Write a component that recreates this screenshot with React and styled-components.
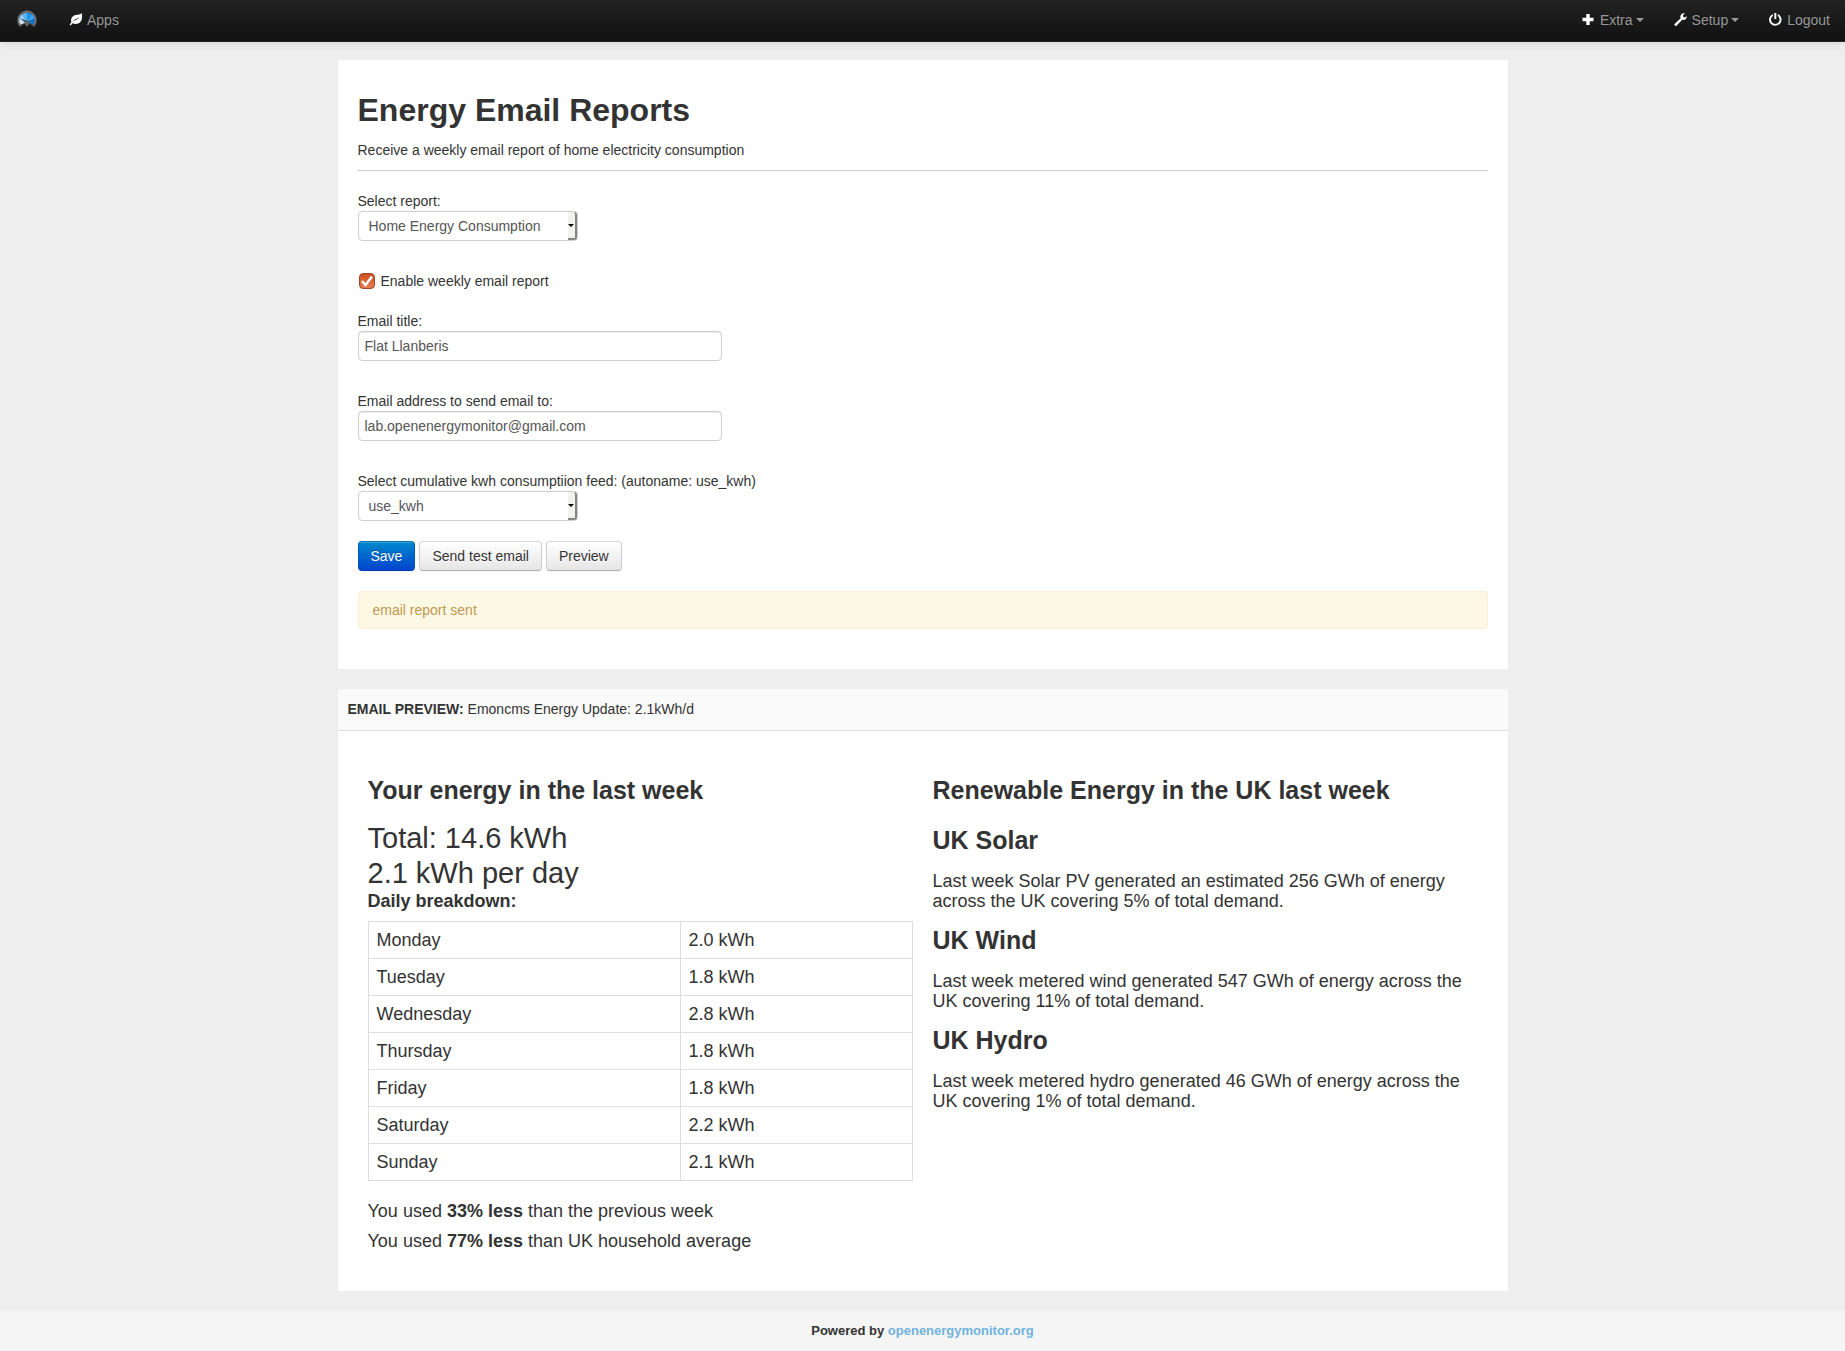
import React, { useState } from "react";
import styled, { createGlobalStyle, css } from "styled-components";

const GlobalStyle = createGlobalStyle`
  *, *::before, *::after { box-sizing: border-box; }
  #root { display: flex; flex-direction: column; min-height: 100vh; }
  body {
    margin: 0;
    background: #eee;
    color: #333;
    font-family: "Liberation Sans", Helvetica, Arial, sans-serif;
    font-size: 14px;
    line-height: 20px;
  }
`;

const Navbar = styled.nav`
  display: flex;
  justify-content: space-between;
  height: 42px;
  border-bottom: 1px solid #252525;
  background: linear-gradient(to bottom, #222, #111);
  box-shadow: 0 1px 10px rgba(0, 0, 0, 0.1);
`;

const NavGroup = styled.div`
  display: flex;
`;

const NavLink = styled.a`
  display: flex;
  align-items: center;
  padding: 0 15px;
  height: 40px;
  color: #999;
  text-decoration: none;
  text-shadow: 0 -1px 0 rgba(0, 0, 0, 0.25);
`;

const Icon = styled.svg`
  width: 14px;
  height: 14px;
  margin-right: 4px;
  fill: #fff;
`;

const Logo = styled.svg`
  width: 24px;
  height: 24px;
`;

const Caret = styled.span`
  margin-left: 3px;
  border: 4px solid transparent;
  border-top-color: #999;
  border-bottom: 0;
`;

const Main = styled.main`
  display: flex;
  flex-direction: column;
  gap: 20px;
  width: 100%;
  max-width: 1170px;
  margin: 18px auto 20px;
`;

const Card = styled.section`
  background: #fff;
`;

const FormCard = styled(Card)`
  padding: 30px 20px 40px;
`;

const Title = styled.h1`
  margin: 0 0 10px;
  font-size: 32px;
  line-height: 40px;
`;

const Intro = styled.p`
  margin: 0 0 10px;
`;

const Rule = styled.hr`
  height: 1px;
  margin: 0 0 20px;
  border: 0;
  background: #ccc;
`;

const Field = styled.div`
  display: flex;
  flex-direction: column;
  align-items: flex-start;
  margin-bottom: ${(p) => (p.$last ? 20 : 30)}px;
`;

const control = css`
  height: 30px;
  border: 1px solid #ccc;
  border-radius: 4px;
  background: #fff;
  color: #555;
  font: inherit;
`;

const TextInput = styled.input`
  ${control}
  width: 364px;
  max-width: 100%;
  padding: 4px 6px;
  box-shadow: inset 0 1px 1px rgba(0, 0, 0, 0.075);
`;

const SelectBox = styled.div`
  position: relative;
  width: 220px;
`;

const Select = styled.select`
  ${control}
  width: 100%;
  padding: 4px 20px 4px 10px;
  appearance: none;
`;

const SelectArrow = styled.span`
  position: absolute;
  top: 1px;
  right: 1px;
  bottom: 1px;
  display: flex;
  align-items: center;
  justify-content: center;
  width: 9px;
  border-right: 2px solid #858585;
  border-bottom: 2px solid #858585;
  border-radius: 0 3px 3px 0;
  background: #f0f0ee;
  pointer-events: none;

  &::before {
    content: "";
    border: 3px solid transparent;
    border-top-color: #000;
    border-bottom: 0;
  }
`;

const CheckRow = styled.label`
  display: flex;
  align-items: center;
  gap: 6px;
  margin-bottom: 20px;
`;

const CheckFrame = styled.span`
  position: relative;
  display: flex;
  width: 17px;
  padding-left: 1px;
`;

const Checkbox = styled.input`
  appearance: none;
  width: 16px;
  height: 16px;
  margin: 0;
  border: 1px solid #9a4a2a;
  border-radius: 4px;
  background: #fff;

  &:checked {
    background: linear-gradient(to bottom, #d0501f, #e57c50);
  }
`;

const Tick = styled.svg`
  position: absolute;
  top: 0;
  left: 1px;
  width: 16px;
  height: 16px;
  fill: none;
  stroke: #fff;
  stroke-width: 2.4;
  pointer-events: none;
`;

const Buttons = styled.div`
  display: flex;
  gap: 4px;
  margin-bottom: 20px;
`;

const Button = styled.button`
  height: 30px;
  padding: 0 12px;
  border: 1px solid;
  border-radius: 4px;
  font: inherit;
  ${(p) =>
    p.$primary
      ? css`
          border-color: #0074bb #0058b8 #003bb3;
          background: linear-gradient(to bottom, #08c, #04c);
          color: #fff;
          text-shadow: 0 -1px 0 rgba(0, 0, 0, 0.25);
        `
      : css`
          border-color: #d9d9d9 #cfcfcf #b3b3b3;
          background: linear-gradient(to bottom, #fff, #e6e6e6);
          color: #333;
          text-shadow: 0 1px 1px rgba(255, 255, 255, 0.75);
        `}
  box-shadow: inset 0 1px 0 rgba(255, 255, 255, 0.2), 0 1px 2px rgba(0, 0, 0, 0.05);
`;

const Alert = styled.div`
  padding: 8px 14px;
  border: 1px solid #fbeed5;
  border-radius: 4px;
  background: #fcf8e3;
  color: #c09853;
`;

const PreviewHeader = styled.header`
  padding: 10px 10px 11px;
  border-bottom: 1px solid #ddd;
  background: #fafafa;
`;

const PreviewBody = styled.div`
  display: grid;
  grid-template-columns: 1fr 1fr;
  gap: 20px;
  padding: 40px 30px;
  font-size: 18px;
`;

const Heading = styled.h2`
  margin: 0 0 12px;
  font-size: 25px;
  line-height: 38px;
`;

const SubHeading = styled(Heading).attrs({ as: "h3" })``;

const Total = styled.div`
  font-size: 29px;
  line-height: 35px;
`;

const Table = styled.table`
  width: 100%;
  margin-bottom: 20px;
  border-collapse: collapse;

  caption {
    margin-bottom: 10px;
    font-weight: bold;
    text-align: left;
  }

  th, td {
    padding: 8px;
    border: 1px solid #ddd;
    font-weight: normal;
    text-align: left;
  }
`;

const Text = styled.p`
  margin: 0 0 10px;

  &:last-child { margin-bottom: 0; }
`;

const Footer = styled.footer`
  flex: 1;
  padding: 10px;
  background: #f5f5f5;
  font-size: 13px;
  font-weight: bold;
  text-align: center;

  a {
    color: #70b3dd;
    text-decoration: none;
  }
`;

const days = [
  ["Monday", "2.0"],
  ["Tuesday", "1.8"],
  ["Wednesday", "2.8"],
  ["Thursday", "1.8"],
  ["Friday", "1.8"],
  ["Saturday", "2.2"],
  ["Sunday", "2.1"],
];

const sources = [
  ["UK Solar", "Last week Solar PV generated an estimated 256 GWh of energy across the UK covering 5% of total demand."],
  ["UK Wind", "Last week metered wind generated 547 GWh of energy across the UK covering 11% of total demand."],
  ["UK Hydro", "Last week metered hydro generated 46 GWh of energy across the UK covering 1% of total demand."],
];

function GaugeLogo() {
  return (
    <Logo viewBox="0 0 24 24" aria-hidden="true">
      <path
        d="M4.800 18.800A9.600 9.600 0 1 1 19.200 18.800L16 16.500L14.500 15L12 18.500L9.500 15L8 16.500Z"
        fill="#5d5d5d"
        stroke="#454545"
        strokeWidth="0.8"
      />
      <path d="M5.200 17.200A8.700 8.700 0 1 1 18.800 17.200" fill="none" stroke="#8c8c8c" strokeWidth="0.7" />
      <path d="M12 14L5.600 16.600A7.800 7.800 0 0 1 4.300 10.500Z" fill="#c9e0f2" />
      <path d="M12 14L4.300 10.500A7.800 7.800 0 0 1 7.200 6.300Z" fill="#8fcbf8" />
      <path d="M12 14L7.200 6.300A7.800 7.800 0 0 1 12 4.700Z" fill="#55b3f6" />
      <path d="M12 14V4.700A7.800 7.800 0 0 1 16.800 6.300Z" fill="#1b93ee" />
      <path d="M12 14L16.800 6.300A7.800 7.800 0 0 1 19.700 10.500Z" fill="#3aa4f2" />
      <path d="M12 14L19.700 10.500A7.800 7.800 0 0 1 18.400 16.600Z" fill="#1672c2" />
      <path d="M5.500 10.600L13.600 13.600L11.500 16Z" fill="#3c4650" />
      <circle cx="12" cy="15.500" r="2.300" fill="#666" />
    </Logo>
  );
}

function SelectField({ id, label, value, last }) {
  return (
    <Field $last={last}>
      <label htmlFor={id}>{label}</label>
      <SelectBox>
        <Select id={id} defaultValue={value}>
          <option>{value}</option>
        </Select>
        <SelectArrow />
      </SelectBox>
    </Field>
  );
}

function TextField({ id, label, value, type = "text" }) {
  return (
    <Field>
      <label htmlFor={id}>{label}</label>
      <TextInput id={id} type={type} defaultValue={value} />
    </Field>
  );
}

export default function App() {
  const [enabled, setEnabled] = useState(true);

  return (
    <>
      <GlobalStyle />
      <Navbar>
        <NavGroup>
          <NavLink href="#home" aria-label="Home">
            <GaugeLogo />
          </NavLink>
          <NavLink href="#apps">
            <Icon viewBox="0 0 14 14">
              <path
                fillRule="evenodd"
                d="M12.700 0C13.700 4.500 13 9.300 9 10.600C6.900 11.300 5 10.800 3.600 10.200C2.900 10.800 2.300 11.600 1.800 12.500L0.600 11.800C1 10.900 1.700 10 2.400 9.300C1.300 5.800 3.400 2.800 6.700 2.100C9 1.600 11.500 1.700 12.700 0ZM10.300 4C8.300 6 5.500 6 3.500 8.700C5.900 6.900 8.800 6.800 10.300 4Z"
              />
            </Icon>
            Apps
          </NavLink>
        </NavGroup>
        <NavGroup>
          <NavLink href="#extra">
            <Icon viewBox="0 0 14 14">
              <path d="M4.300 1H7.700V4.800H11.500V8.200H7.700V12H4.300V8.200H0.500V4.800H4.300Z" />
            </Icon>
            Extra
            <Caret />
          </NavLink>
          <NavLink href="#setup">
            <Icon viewBox="0 0 14 14">
              <path d="M12.700 3.300L10.600 4.500L9 3.600V2L11 0.500C9.200 0 7.300 0.700 6.600 2.400C6.200 3.400 6.300 4.400 6.700 5.200L0.800 10.700C0.200 11.400 0.300 12.200 0.800 12.600C1.300 13.100 2.100 13.100 2.700 12.400L8.200 6.800C10.700 7.500 13 5.900 12.700 3.300Z" />
            </Icon>
            Setup
            <Caret />
          </NavLink>
          <NavLink href="#logout">
            <Icon viewBox="0 0 14 14">
              <path d="M5.300 0H7.300V6H5.300ZM3.800 0.900V3.100A4.300 4.300 0 1 0 8.800 3.100V0.900A6.200 6.200 0 1 1 3.800 0.900Z" />
            </Icon>
            Logout
          </NavLink>
        </NavGroup>
      </Navbar>

      <Main>
        <FormCard>
          <Title>Energy Email Reports</Title>
          <Intro>Receive a weekly email report of home electricity consumption</Intro>
          <Rule />
          <SelectField id="report" label="Select report:" value="Home Energy Consumption" />
          <CheckRow>
            <CheckFrame>
              <Checkbox
                type="checkbox"
                checked={enabled}
                onChange={(e) => setEnabled(e.target.checked)}
              />
              {enabled && (
                <Tick viewBox="0 0 16 16">
                  <path d="M3 8L6.500 12L13 3.500" />
                </Tick>
              )}
            </CheckFrame>
            Enable weekly email report
          </CheckRow>
          <TextField id="title" label="Email title:" value="Flat Llanberis" />
          <TextField
            id="email"
            type="email"
            label="Email address to send email to:"
            value="lab.openenergymonitor@gmail.com"
          />
          <SelectField
            id="feed"
            label="Select cumulative kwh consumptiion feed: (autoname: use_kwh)"
            value="use_kwh"
            last
          />
          <Buttons>
            <Button type="button" $primary>Save</Button>
            <Button type="button">Send test email</Button>
            <Button type="button">Preview</Button>
          </Buttons>
          <Alert role="status">email report sent</Alert>
        </FormCard>

        <Card>
          <PreviewHeader>
            <b>EMAIL PREVIEW:</b> Emoncms Energy Update: 2.1kWh/d
          </PreviewHeader>
          <PreviewBody>
            <div>
              <Heading>Your energy in the last week</Heading>
              <Total>Total: 14.6 kWh</Total>
              <Total>2.1 kWh per day</Total>
              <Table>
                <caption>Daily breakdown:</caption>
                <tbody>
                  {days.map(([day, kwh]) => (
                    <tr key={day}>
                      <th scope="row">{day}</th>
                      <td>{kwh} kWh</td>
                    </tr>
                  ))}
                </tbody>
              </Table>
              <Text>You used <b>33% less</b> than the previous week</Text>
              <Text>You used <b>77% less</b> than UK household average</Text>
            </div>
            <div>
              <Heading>Renewable Energy in the UK last week</Heading>
              {sources.map(([name, text]) => (
                <React.Fragment key={name}>
                  <SubHeading>{name}</SubHeading>
                  <Text>{text}</Text>
                </React.Fragment>
              ))}
            </div>
          </PreviewBody>
        </Card>
      </Main>

      <Footer>
        Powered by <a href="#openenergymonitor">openenergymonitor.org</a>
      </Footer>
    </>
  );
}
